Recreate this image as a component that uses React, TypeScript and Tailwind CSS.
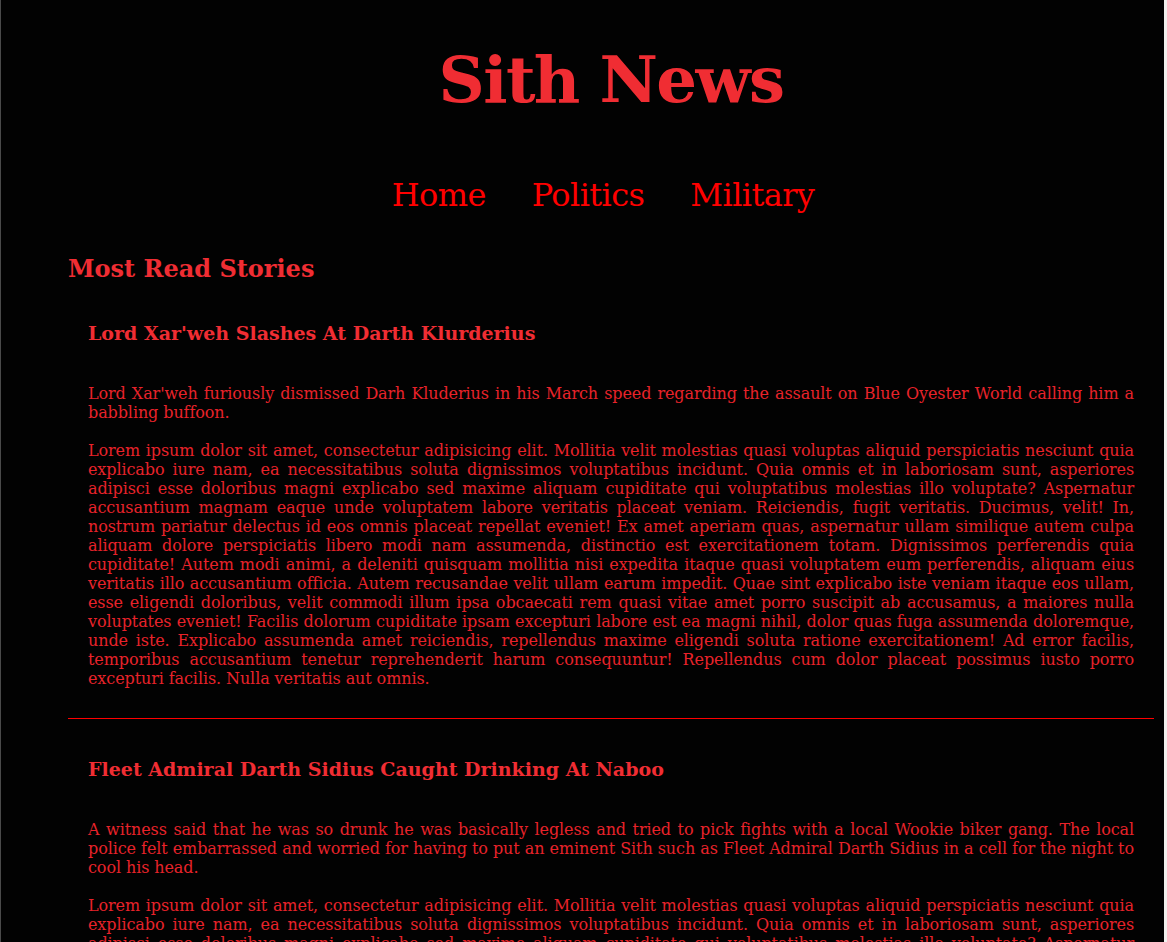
import React from 'react';

const lorem =
    'Lorem ipsum dolor sit amet, consectetur adipisicing elit. Mollitia velit molestias quasi voluptas aliquid perspiciatis nesciunt quia explicabo iure nam, ea necessitatibus soluta dignissimos voluptatibus incidunt. Quia omnis et in laboriosam sunt, asperiores adipisci esse doloribus magni explicabo sed maxime aliquam cupiditate qui voluptatibus molestias illo voluptate? Aspernatur accusantium magnam eaque unde voluptatem labore veritatis placeat veniam. Reiciendis, fugit veritatis. Ducimus, velit! In, nostrum pariatur delectus id eos omnis placeat repellat eveniet! Ex amet aperiam quas, aspernatur ullam similique autem culpa aliquam dolore perspiciatis libero modi nam assumenda, distinctio est exercitationem totam. Dignissimos perferendis quia cupiditate! Autem modi animi, a deleniti quisquam mollitia nisi expedita itaque quasi voluptatem eum perferendis, aliquam eius veritatis illo accusantium officia. Autem recusandae velit ullam earum impedit. Quae sint explicabo iste veniam itaque eos ullam, esse eligendi doloribus, velit commodi illum ipsa obcaecati rem quasi vitae amet porro suscipit ab accusamus, a maiores nulla voluptates eveniet! Facilis dolorum cupiditate ipsam excepturi labore est ea magni nihil, dolor quas fuga assumenda doloremque, unde iste. Explicabo assumenda amet reiciendis, repellendus maxime eligendi soluta ratione exercitationem! Ad error facilis, temporibus accusantium tenetur reprehenderit harum consequuntur! Repellendus cum dolor placeat possimus iusto porro excepturi facilis. Nulla veritatis aut omnis.';

const stories = [
    {
        title: "Lord Xar'weh Slashes At Darth Klurderius",
        summary:
            "Lord Xar'weh furiously dismissed Darh Kluderius in his March speed regarding the assault on Blue Oyester World calling him a babbling buffoon.",
    },
    {
        title: 'Fleet Admiral Darth Sidius Caught Drinking At Naboo',
        summary:
            'A witness said that he was so drunk he was basically legless and tried to pick fights with a local Wookie biker gang. The local police felt embarrassed and worried for having to put an eminent Sith such as Fleet Admiral Darth Sidius in a cell for the night to cool his head.',
    },
];

const Story = ({ title, summary }: { title: string; summary: string }) => (
    <article className="px-[20px] pt-[39px] pb-[30px]">
        <h3 className="text-[19px] leading-[22px] font-bold text-[#f02d33]">{title}</h3>
        <p className="mt-[40px] text-[16px] leading-[19px] tracking-[-0.1px] text-justify text-[#e8222a]">{summary}</p>
        <p className="mt-[19px] text-[16px] leading-[19px] tracking-[-0.1px] text-justify text-[#e8222a]">{lorem}</p>
    </article>
);

export default function App() {
    return (
        <div className="flex min-h-screen bg-[#020202] font-['DejaVu_Serif',serif]">
            <div className="w-px shrink-0 bg-[#4a4a4a]" />
            <main className="flex-1 pl-[57px]">
                <h1 className="mt-[43px] text-center text-[64px] leading-[74px] tracking-[-1.6px] font-bold text-[#f02d33]">
                    Sith News
                </h1>
                <nav className="mt-[60px] flex justify-center gap-[46px] pr-[16px] text-[32px] leading-[37px] tracking-[-0.6px] text-[#ff0000]">
                    <a href="#">Home</a>
                    <a href="#">Politics</a>
                    <a href="#">Military</a>
                </nav>
                <section className="mx-[10px] mt-[41px]">
                    <h2 className="text-[24px] leading-[28px] font-bold text-[#f02d33]">Most Read Stories</h2>
                    {stories.map((s, i) => (
                        <div key={i}>
                            {i > 0 && <hr className="border-0 h-px bg-[#ff0000]" />}
                            <Story title={s.title} summary={s.summary} />
                        </div>
                    ))}
                </section>
            </main>
            <div className="w-[3px] shrink-0 bg-[#f1f0ee]" />
        </div>
    );
}
